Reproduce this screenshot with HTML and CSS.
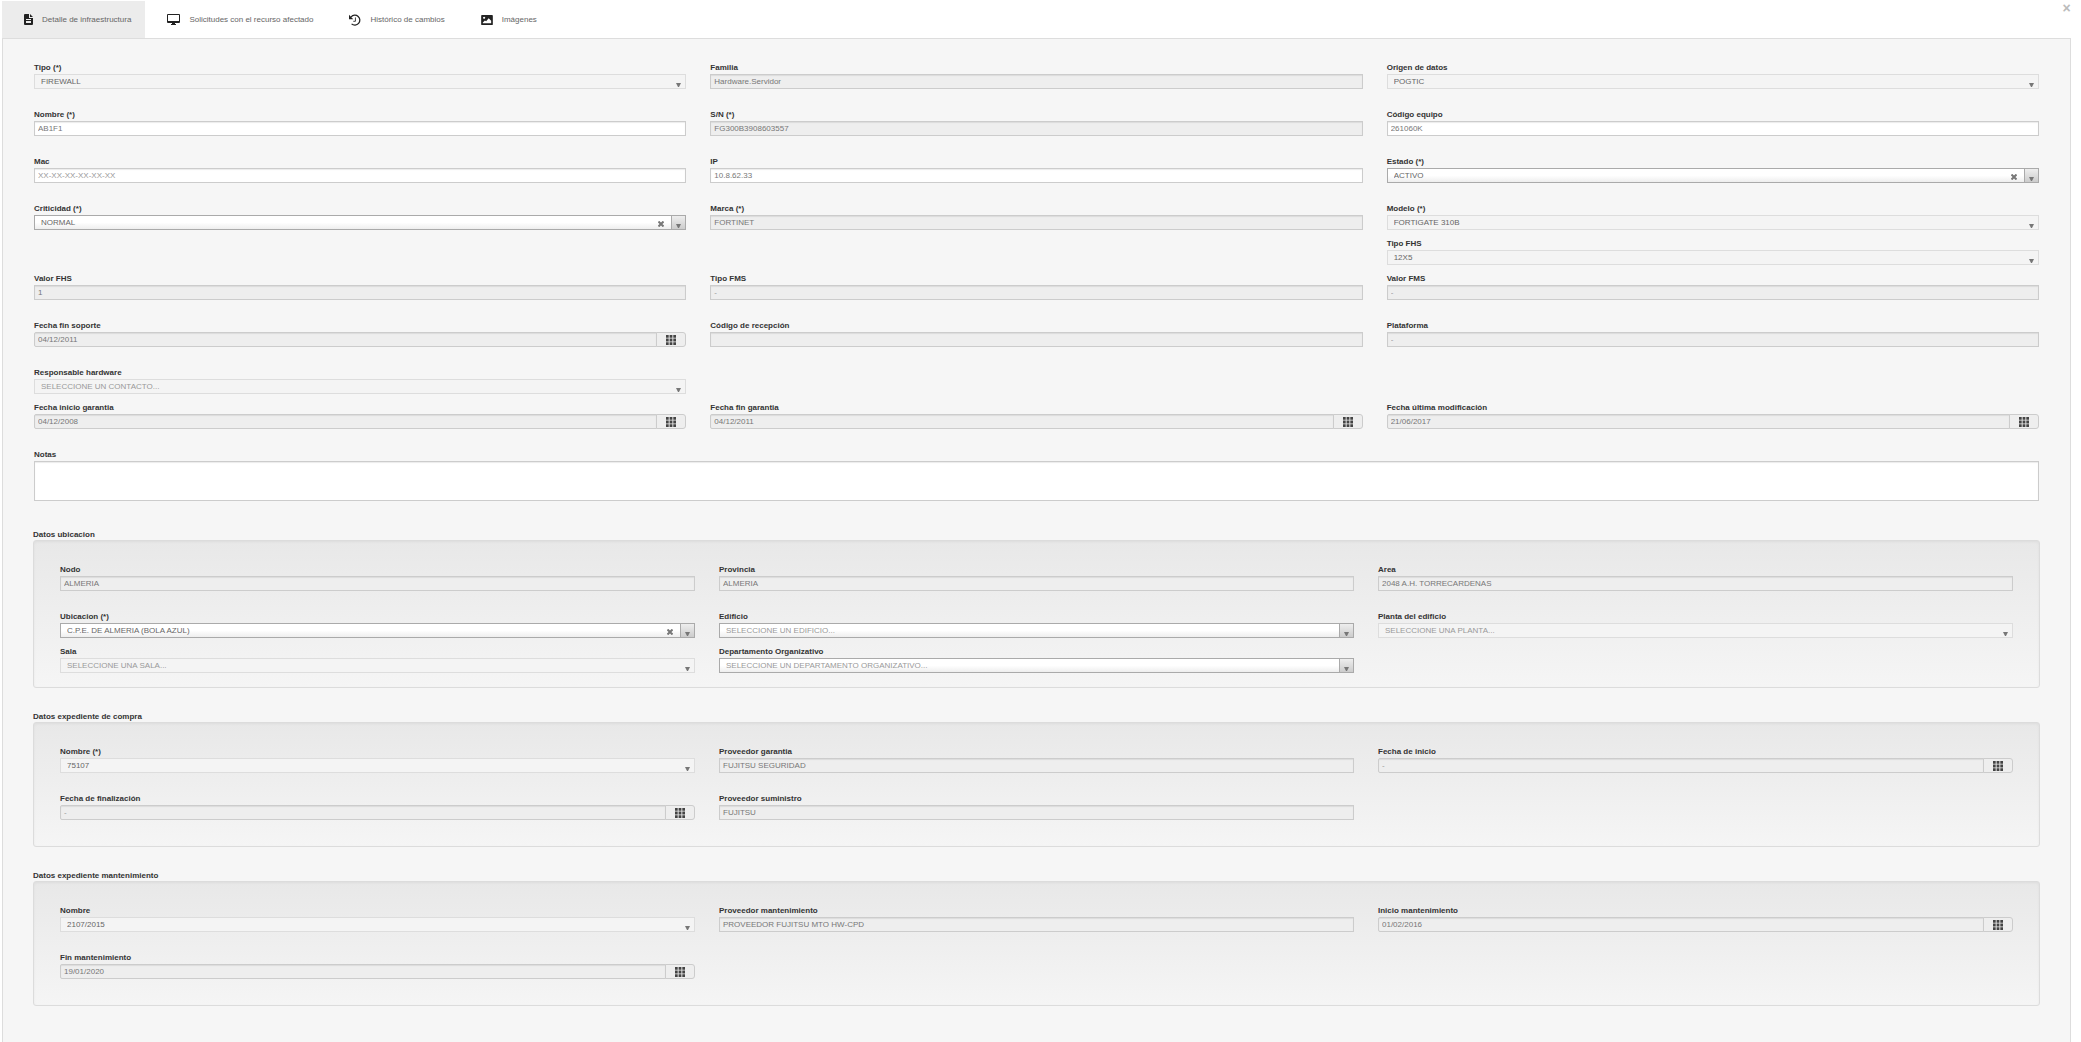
FILE: index.html
```html
<!DOCTYPE html>
<html lang="es">

<head>
    <title>Detalle de infraestructura</title>
    <meta charset="utf-8">
    <link rel="stylesheet" href="styles.css">
</head>

<body>
    <svg class="sprite" width="0" height="0">
        <symbol id="ico-file" viewBox="0 0 9 11">
            <path fill-rule="evenodd" d="M1 0h4v4h4v6a1 1 0 0 1-1 1H1a1 1 0 0 1-1-1V1a1 1 0 0 1 1-1zM6 0l3 3H6zM2 5v1h5V5zM2 7v2h5V7z"/>
        </symbol>
        <symbol id="ico-desktop" viewBox="0 0 13 11">
            <path fill-rule="evenodd" d="M1 0h11a1 1 0 0 1 1 1v7a1 1 0 0 1-1 1H8v1h1v1H4v-1h1V9H1a1 1 0 0 1-1-1V1a1 1 0 0 1 1-1zM1 1v6h11V1z"/>
        </symbol>
        <symbol id="ico-history" viewBox="0 0 14 14">
            <path d="M2.500 3.300A5.800 5.800 0 1 1 3 11.500" fill="none" stroke="currentColor" stroke-width="1.500"/>
            <path d="M0 1v5h5z"/>
            <path d="M7.500 4v4.500H5" fill="none" stroke="currentColor"/>
        </symbol>
        <symbol id="ico-picture" viewBox="0 0 14 12">
            <path fill-rule="evenodd" d="M1 0h12a1 1 0 0 1 1 1v10a1 1 0 0 1-1 1H1a1 1 0 0 1-1-1V1a1 1 0 0 1 1-1zM2 10h10V7L9 4 6 7.500 4.500 6.500 2 9zM3.500 2a1.300 1.300 0 1 0 .1 0z"/>
        </symbol>
        <symbol id="ico-th" viewBox="0 0 10 10">
            <path d="M0 0h2.700v2.700H0zM3.600 0h2.800v2.700H3.600zM7.300 0H10v2.700H7.300zM0 3.600h2.700v2.800H0zM3.600 3.600h2.800v2.800H3.600zM7.300 3.600H10v2.800H7.300zM0 7.300h2.700V10H0zM3.600 7.300h2.800V10H3.600zM7.300 7.300H10V10H7.300z"/>
        </symbol>
        <symbol id="ico-x" viewBox="0 0 6 6">
            <path d="M.5.5l5 5M5.500.5l-5 5" fill="none" stroke="currentColor" stroke-width="2"/>
        </symbol>
    </svg>

    <button type="button" class="close" aria-label="Cerrar">&times;</button>

    <nav class="tabs">
        <a class="tab active" href="#detalle"><svg width="9" height="11"><use href="#ico-file"/></svg>Detalle de infraestructura</a>
        <a class="tab" href="#solicitudes"><svg width="13" height="11"><use href="#ico-desktop"/></svg>Solicitudes con el recurso afectado</a>
        <a class="tab" href="#historico"><svg width="12" height="12"><use href="#ico-history"/></svg>Histórico de cambios</a>
        <a class="tab" href="#imagenes"><svg width="12" height="10"><use href="#ico-picture"/></svg>Imágenes</a>
    </nav>

    <form class="panel" id="detalle">
        <div class="row">
            <div class="field">
                <label for="tipo">Tipo (*)</label>
                <div class="combo disabled"><select id="tipo" disabled><option>FIREWALL</option></select><span class="arrow"></span></div>
            </div>
            <div class="field">
                <label for="familia">Familia</label>
                <input type="text" id="familia" value="Hardware.Servidor" disabled>
            </div>
            <div class="field">
                <label for="origen">Origen de datos</label>
                <div class="combo disabled"><select id="origen" disabled><option>POGTIC</option></select><span class="arrow"></span></div>
            </div>
        </div>

        <div class="row">
            <div class="field">
                <label for="nombre">Nombre (*)</label>
                <input type="text" id="nombre" value="AB1F1">
            </div>
            <div class="field">
                <label for="sn">S/N (*)</label>
                <input type="text" id="sn" value="FG300B3908603557" disabled>
            </div>
            <div class="field">
                <label for="codigo">Código equipo</label>
                <input type="text" id="codigo" value="261060K">
            </div>
        </div>

        <div class="row">
            <div class="field">
                <label for="mac">Mac</label>
                <input type="text" id="mac" placeholder="XX-XX-XX-XX-XX-XX">
            </div>
            <div class="field">
                <label for="ip">IP</label>
                <input type="text" id="ip" value="10.8.62.33">
            </div>
            <div class="field">
                <label for="estado">Estado (*)</label>
                <div class="combo"><select id="estado"><option>ACTIVO</option></select><button type="button" class="clear" aria-label="Limpiar"><svg width="6" height="6"><use href="#ico-x"/></svg></button><span class="arrow"></span></div>
            </div>
        </div>

        <div class="row tight">
            <div class="field">
                <label for="criticidad">Criticidad (*)</label>
                <div class="combo"><select id="criticidad"><option>NORMAL</option></select><button type="button" class="clear" aria-label="Limpiar"><svg width="6" height="6"><use href="#ico-x"/></svg></button><span class="arrow"></span></div>
            </div>
            <div class="field">
                <label for="marca">Marca (*)</label>
                <input type="text" id="marca" value="FORTINET" disabled>
            </div>
            <div class="field">
                <label for="modelo">Modelo (*)</label>
                <div class="combo disabled"><select id="modelo" disabled><option>FORTIGATE 310B</option></select><span class="arrow"></span></div>
            </div>
        </div>

        <div class="row tight">
            <div class="field last">
                <label for="tipofhs">Tipo FHS</label>
                <div class="combo disabled"><select id="tipofhs" disabled><option>12X5</option></select><span class="arrow"></span></div>
            </div>
        </div>

        <div class="row">
            <div class="field">
                <label for="valorfhs">Valor FHS</label>
                <input type="text" id="valorfhs" value="1" disabled>
            </div>
            <div class="field">
                <label for="tipofms">Tipo FMS</label>
                <input type="text" id="tipofms" placeholder="-" disabled>
            </div>
            <div class="field">
                <label for="valorfms">Valor FMS</label>
                <input type="text" id="valorfms" placeholder="-" disabled>
            </div>
        </div>

        <div class="row">
            <div class="field">
                <label for="finsoporte">Fecha fin soporte</label>
                <div class="date"><input type="text" id="finsoporte" value="04/12/2011" disabled><button type="button" class="addon" aria-label="Calendario"><svg width="10" height="10"><use href="#ico-th"/></svg></button></div>
            </div>
            <div class="field">
                <label for="recepcion">Código de recepción</label>
                <input type="text" id="recepcion" disabled>
            </div>
            <div class="field">
                <label for="plataforma">Plataforma</label>
                <input type="text" id="plataforma" placeholder="-" disabled>
            </div>
        </div>

        <div class="row tight">
            <div class="field">
                <label for="responsable">Responsable hardware</label>
                <div class="combo disabled empty"><select id="responsable" disabled><option>SELECCIONE UN CONTACTO...</option></select><span class="arrow"></span></div>
            </div>
        </div>

        <div class="row">
            <div class="field">
                <label for="inigarantia">Fecha inicio garantia</label>
                <div class="date"><input type="text" id="inigarantia" value="04/12/2008" disabled><button type="button" class="addon" aria-label="Calendario"><svg width="10" height="10"><use href="#ico-th"/></svg></button></div>
            </div>
            <div class="field">
                <label for="fingarantia">Fecha fin garantia</label>
                <div class="date"><input type="text" id="fingarantia" value="04/12/2011" disabled><button type="button" class="addon" aria-label="Calendario"><svg width="10" height="10"><use href="#ico-th"/></svg></button></div>
            </div>
            <div class="field">
                <label for="modificacion">Fecha última modificación</label>
                <div class="date"><input type="text" id="modificacion" value="21/06/2017" disabled><button type="button" class="addon" aria-label="Calendario"><svg width="10" height="10"><use href="#ico-th"/></svg></button></div>
            </div>
        </div>

        <div class="field notes">
            <label for="notas">Notas</label>
            <textarea id="notas"></textarea>
        </div>

        <h4>Datos ubicacion</h4>
        <div class="well">
            <div class="row">
                <div class="field">
                    <label for="nodo">Nodo</label>
                    <input type="text" id="nodo" value="ALMERIA" disabled>
                </div>
                <div class="field">
                    <label for="provincia">Provincia</label>
                    <input type="text" id="provincia" value="ALMERIA" disabled>
                </div>
                <div class="field">
                    <label for="area">Area</label>
                    <input type="text" id="area" value="2048 A.H. TORRECARDENAS" disabled>
                </div>
            </div>
            <div class="row tight">
                <div class="field">
                    <label for="ubicacion">Ubicacion (*)</label>
                    <div class="combo"><select id="ubicacion"><option>C.P.E. DE ALMERIA (BOLA AZUL)</option></select><button type="button" class="clear" aria-label="Limpiar"><svg width="6" height="6"><use href="#ico-x"/></svg></button><span class="arrow"></span></div>
                </div>
                <div class="field">
                    <label for="edificio">Edificio</label>
                    <div class="combo empty"><select id="edificio"><option>SELECCIONE UN EDIFICIO...</option></select><span class="arrow"></span></div>
                </div>
                <div class="field">
                    <label for="planta">Planta del edificio</label>
                    <div class="combo disabled empty"><select id="planta" disabled><option>SELECCIONE UNA PLANTA...</option></select><span class="arrow"></span></div>
                </div>
            </div>
            <div class="row tight">
                <div class="field">
                    <label for="sala">Sala</label>
                    <div class="combo disabled empty"><select id="sala" disabled><option>SELECCIONE UNA SALA...</option></select><span class="arrow"></span></div>
                </div>
                <div class="field">
                    <label for="departamento">Departamento Organizativo</label>
                    <div class="combo empty"><select id="departamento"><option>SELECCIONE UN DEPARTAMENTO ORGANIZATIVO...</option></select><span class="arrow"></span></div>
                </div>
            </div>
        </div>

        <h4>Datos expediente de compra</h4>
        <div class="well">
            <div class="row">
                <div class="field">
                    <label for="compra">Nombre (*)</label>
                    <div class="combo disabled"><select id="compra" disabled><option>75107</option></select><span class="arrow"></span></div>
                </div>
                <div class="field">
                    <label for="provgarantia">Proveedor garantia</label>
                    <input type="text" id="provgarantia" value="FUJITSU SEGURIDAD" disabled>
                </div>
                <div class="field">
                    <label for="fechainicio">Fecha de inicio</label>
                    <div class="date"><input type="text" id="fechainicio" placeholder="-" disabled><button type="button" class="addon" aria-label="Calendario"><svg width="10" height="10"><use href="#ico-th"/></svg></button></div>
                </div>
            </div>
            <div class="row">
                <div class="field">
                    <label for="fechafin">Fecha de finalización</label>
                    <div class="date"><input type="text" id="fechafin" placeholder="-" disabled><button type="button" class="addon" aria-label="Calendario"><svg width="10" height="10"><use href="#ico-th"/></svg></button></div>
                </div>
                <div class="field">
                    <label for="provsuministro">Proveedor suministro</label>
                    <input type="text" id="provsuministro" value="FUJITSU" disabled>
                </div>
            </div>
        </div>

        <h4>Datos expediente mantenimiento</h4>
        <div class="well">
            <div class="row">
                <div class="field">
                    <label for="mantenimiento">Nombre</label>
                    <div class="combo disabled"><select id="mantenimiento" disabled><option>2107/2015</option></select><span class="arrow"></span></div>
                </div>
                <div class="field">
                    <label for="provmant">Proveedor mantenimiento</label>
                    <input type="text" id="provmant" value="PROVEEDOR FUJITSU MTO HW-CPD" disabled>
                </div>
                <div class="field">
                    <label for="inimant">Inicio mantenimiento</label>
                    <div class="date"><input type="text" id="inimant" value="01/02/2016" disabled><button type="button" class="addon" aria-label="Calendario"><svg width="10" height="10"><use href="#ico-th"/></svg></button></div>
                </div>
            </div>
            <div class="row">
                <div class="field">
                    <label for="finmant">Fin mantenimiento</label>
                    <div class="date"><input type="text" id="finmant" value="19/01/2020" disabled><button type="button" class="addon" aria-label="Calendario"><svg width="10" height="10"><use href="#ico-th"/></svg></button></div>
                </div>
            </div>
        </div>
    </form>
</body>

</html>
```

FILE: styles.css
```css
* {
    box-sizing: border-box
}

body {
    margin: 0;
    padding: 1px 10px 0 2px;
    min-height: 100vh;
    display: flex;
    flex-direction: column;
    background: #fff;
    color: #333;
    font-family: "Liberation Sans", Arial, sans-serif;
    font-size: 8px
}

input,
select,
button,
textarea {
    margin: 0;
    font-family: inherit;
    font-size: 8px;
    color: #777
}

svg {
    fill: currentColor
}

.sprite {
    position: absolute
}

.close {
    position: absolute;
    top: 0;
    right: 9px;
    width: 11px;
    height: 16px;
    padding: 0;
    border: 0;
    background: none;
    color: #bbb;
    font-size: 14px;
    font-weight: bold;
    line-height: 16px
}

.tabs {
    display: flex
}

.tab {
    display: flex;
    align-items: center;
    height: 37px;
    padding: 0 14px 0 22px;
    color: #666;
    text-decoration: none
}

.tab svg {
    margin-right: 9px;
    color: #222
}

.tab.active {
    background: #ececec
}

.panel {
    flex: 1;
    padding: 15px 31px 34px;
    border: 1px solid #ddd;
    border-bottom: 0;
    background: #f6f6f6
}

.row {
    display: grid;
    grid-template-columns: repeat(3, minmax(0, 1fr));
    column-gap: 24px;
    margin-bottom: 12px
}

.row.tight {
    margin-bottom: 0
}

.field {
    padding-top: 8px
}

.field.last {
    grid-column: 3
}

.notes {
    margin-bottom: 28px
}

label {
    display: block;
    width: max-content;
    height: 12px;
    font-weight: bold;
    line-height: 12px
}

input,
textarea {
    display: block;
    width: 100%;
    height: 15px;
    padding: 0 3px;
    border: 1px solid #ccc;
    border-radius: 0;
    background: #fff;
    box-shadow: inset 0 1px 1px rgba(0, 0, 0, .08)
}

input:disabled {
    background: #eee
}

::placeholder {
    color: #999;
    opacity: 1
}

textarea {
    height: 40px;
    resize: none
}

.combo {
    display: flex;
    height: 15px;
    border: 1px solid #aaa;
    background: linear-gradient(#fff 50%, #eee)
}

.combo select {
    flex: 1;
    min-width: 0;
    padding: 0 6px;
    border: 0;
    background: none;
    color: #666;
    opacity: 1;
    appearance: none
}

.combo.empty select {
    color: #999
}

.clear {
    display: flex;
    align-items: flex-end;
    justify-content: center;
    width: 20px;
    padding: 0 0 2px;
    border: 0;
    background: none
}

.arrow {
    width: 14px;
    border-left: 1px solid #aaa;
    background: linear-gradient(#eee, #ccc)
}

.arrow::before {
    content: "";
    display: block;
    width: 1px;
    margin: 8px auto 0;
    border: solid transparent;
    border-width: 4px 2px 0;
    border-top-color: #777
}

.combo.disabled {
    border-color: #ddd;
    background: #f4f4f4
}

.disabled .arrow {
    border-color: transparent;
    background: none
}

.date {
    display: flex
}

.date input {
    flex: 1;
    min-width: 0;
    border-radius: 2px 0 0 2px
}

.addon {
    display: flex;
    align-items: center;
    justify-content: center;
    width: 30px;
    height: 15px;
    margin-left: -1px;
    padding: 0;
    border: 1px solid #ccc;
    border-radius: 0 3px 3px 0;
    background: #eee;
    color: #444
}

h4 {
    margin: 23px -1px 0;
    font-size: 8px;
    line-height: 11px
}

.well {
    margin: 0 -1px;
    padding: 15px 26px 14px;
    border: 1px solid #dcdcdc;
    border-radius: 3px;
    background: linear-gradient(#e8e8e8, #f5f5f5);
    box-shadow: inset 0 1px 3px rgba(0, 0, 0, .05)
}
```
